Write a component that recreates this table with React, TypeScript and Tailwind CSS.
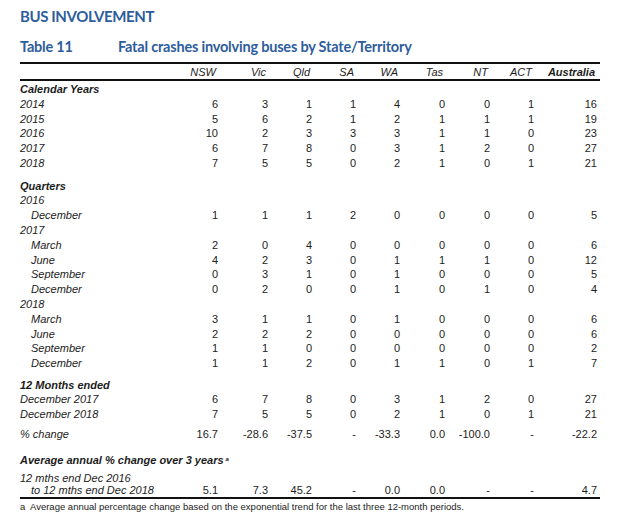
import React from "react";

type Row = {
  label: string;
  values?: string[];
  kind?: "section" | "year" | "item" | "sub";
  h?: string;
  mt?: string;
};

const cols = ["NSW", "Vic", "Qld", "SA", "WA", "Tas", "NT", "ACT", "Australia"];

const grid =
  "grid grid-cols-[152px_46px_50px_44px_44px_44px_45px_45px_44px_63px] items-center";

const rows: Row[] = [
  { label: "Calendar Years", kind: "section" },
  { label: "2014", kind: "year", values: ["6", "3", "1", "1", "4", "0", "0", "1", "16"] },
  { label: "2015", kind: "year", values: ["5", "6", "2", "1", "2", "1", "1", "1", "19"] },
  { label: "2016", kind: "year", values: ["10", "2", "3", "3", "3", "1", "1", "0", "23"] },
  { label: "2017", kind: "year", values: ["6", "7", "8", "0", "3", "1", "2", "0", "27"] },
  { label: "2018", kind: "year", values: ["7", "5", "5", "0", "2", "1", "0", "1", "21"] },
  { label: "Quarters", kind: "section", mt: "mt-[7.8px]" },
  { label: "2016", kind: "year" },
  { label: "December", kind: "item", values: ["1", "1", "1", "2", "0", "0", "0", "0", "5"] },
  { label: "2017", kind: "year" },
  { label: "March", kind: "item", values: ["2", "0", "4", "0", "0", "0", "0", "0", "6"] },
  { label: "June", kind: "item", values: ["4", "2", "3", "0", "1", "1", "1", "0", "12"] },
  { label: "September", kind: "item", values: ["0", "3", "1", "0", "1", "0", "0", "0", "5"] },
  { label: "December", kind: "item", values: ["0", "2", "0", "0", "1", "0", "1", "0", "4"] },
  { label: "2018", kind: "year" },
  { label: "March", kind: "item", values: ["3", "1", "1", "0", "1", "0", "0", "0", "6"] },
  { label: "June", kind: "item", values: ["2", "2", "2", "0", "0", "0", "0", "0", "6"] },
  { label: "September", kind: "item", values: ["1", "1", "0", "0", "0", "0", "0", "0", "2"] },
  { label: "December", kind: "item", values: ["1", "1", "2", "0", "1", "1", "0", "1", "7"] },
  { label: "12 Months ended", kind: "section", mt: "mt-[6.6px]" },
  { label: "December 2017", kind: "year", values: ["6", "7", "8", "0", "3", "1", "2", "0", "27"] },
  { label: "December 2018", kind: "year", values: ["7", "5", "5", "0", "2", "1", "0", "1", "21"] },
  {
    label: "% change",
    kind: "year",
    mt: "mt-[4.6px]",
    values: ["16.7", "-28.6", "-37.5", "-", "-33.3", "0.0", "-100.0", "-", "-22.2"],
  },
];

function TableRow({ row }: { row: Row }) {
  const labelCls =
    row.kind === "section"
      ? "font-bold italic"
      : row.kind === "item"
      ? "italic pl-[11px]"
      : "italic";
  return (
    <div className={`${grid} ${row.h ?? "h-[14.8px]"} ${row.mt ?? ""}`}>
      <div className={`${labelCls} whitespace-nowrap`}>{row.label}</div>
      {(row.values ?? []).map((v, i) => (
        <div key={i} className="text-right whitespace-nowrap">
          {v}
        </div>
      ))}
    </div>
  );
}

export default function App() {
  return (
    <div className="w-[625px] h-[519px] bg-white overflow-hidden">
      <div className="pl-[20px] w-[600px]">
        {/* titres */}
        <div
          className="h-[32px] flex items-center pt-[1px] text-[15px] font-bold tracking-[-0.4px] text-[#2e5d9c]"
          style={{ fontFamily: "Lato, 'Open Sans', sans-serif" }}
        >
          BUS INVOLVEMENT
        </div>
        <div
          className="h-[30px] flex items-center text-[14.5px] font-bold tracking-[-0.2px] text-[#2e5d9c]"
          style={{ fontFamily: "Lato, 'Open Sans', sans-serif" }}
        >
          <span className="w-[98px]">Table 11</span>
          <span>Fatal crashes involving buses by State/Territory</span>
        </div>

        {/* tableau */}
        <div
          className="text-[11px] text-[#1c1c1c]"
          style={{ fontFamily: "'Liberation Sans', Arial, sans-serif" }}
        >
          <div className="border-t-2 border-[#111]" />
          <div className={`${grid} h-[15px] italic`}>
            <div />
            {cols.map((c) => (
              <div
                key={c}
                className={`text-right pr-[2px] ${c === "Australia" ? "font-bold" : ""}`}
              >
                {c}
              </div>
            ))}
          </div>
          <div className="border-t-2 border-[#111]" />

          {rows.map((r, i) => (
            <TableRow key={i} row={r} />
          ))}

          <div className={`${grid} h-[14.8px] mt-[11.2px]`}>
            <div className="col-span-10 font-bold italic">
              Average annual % change over 3 years
              <sup className="text-[6px] ml-[2px]">a</sup>
            </div>
          </div>
          <div className={`${grid} h-[12px] mt-[3.6px]`}>
            <div className="italic col-span-10">12 mths end Dec 2016</div>
          </div>
          <div className={`${grid} h-[12px]`}>
            <div className="italic pl-[11px] whitespace-nowrap">to 12 mths end Dec 2018</div>
            {["5.1", "7.3", "45.2", "-", "0.0", "0.0", "-", "-", "4.7"].map((v, i) => (
              <div key={i} className="text-right">
                {v}
              </div>
            ))}
          </div>
          <div className="mt-[3px] border-t-2 border-[#111]" />
          <div className="h-[16px] flex items-center text-[9.5px] whitespace-nowrap">
            <span className="w-[10px]">a</span>
            Average annual percentage change based on the exponential trend for the last three 12-month periods.
          </div>
        </div>
      </div>
    </div>
  );
}
